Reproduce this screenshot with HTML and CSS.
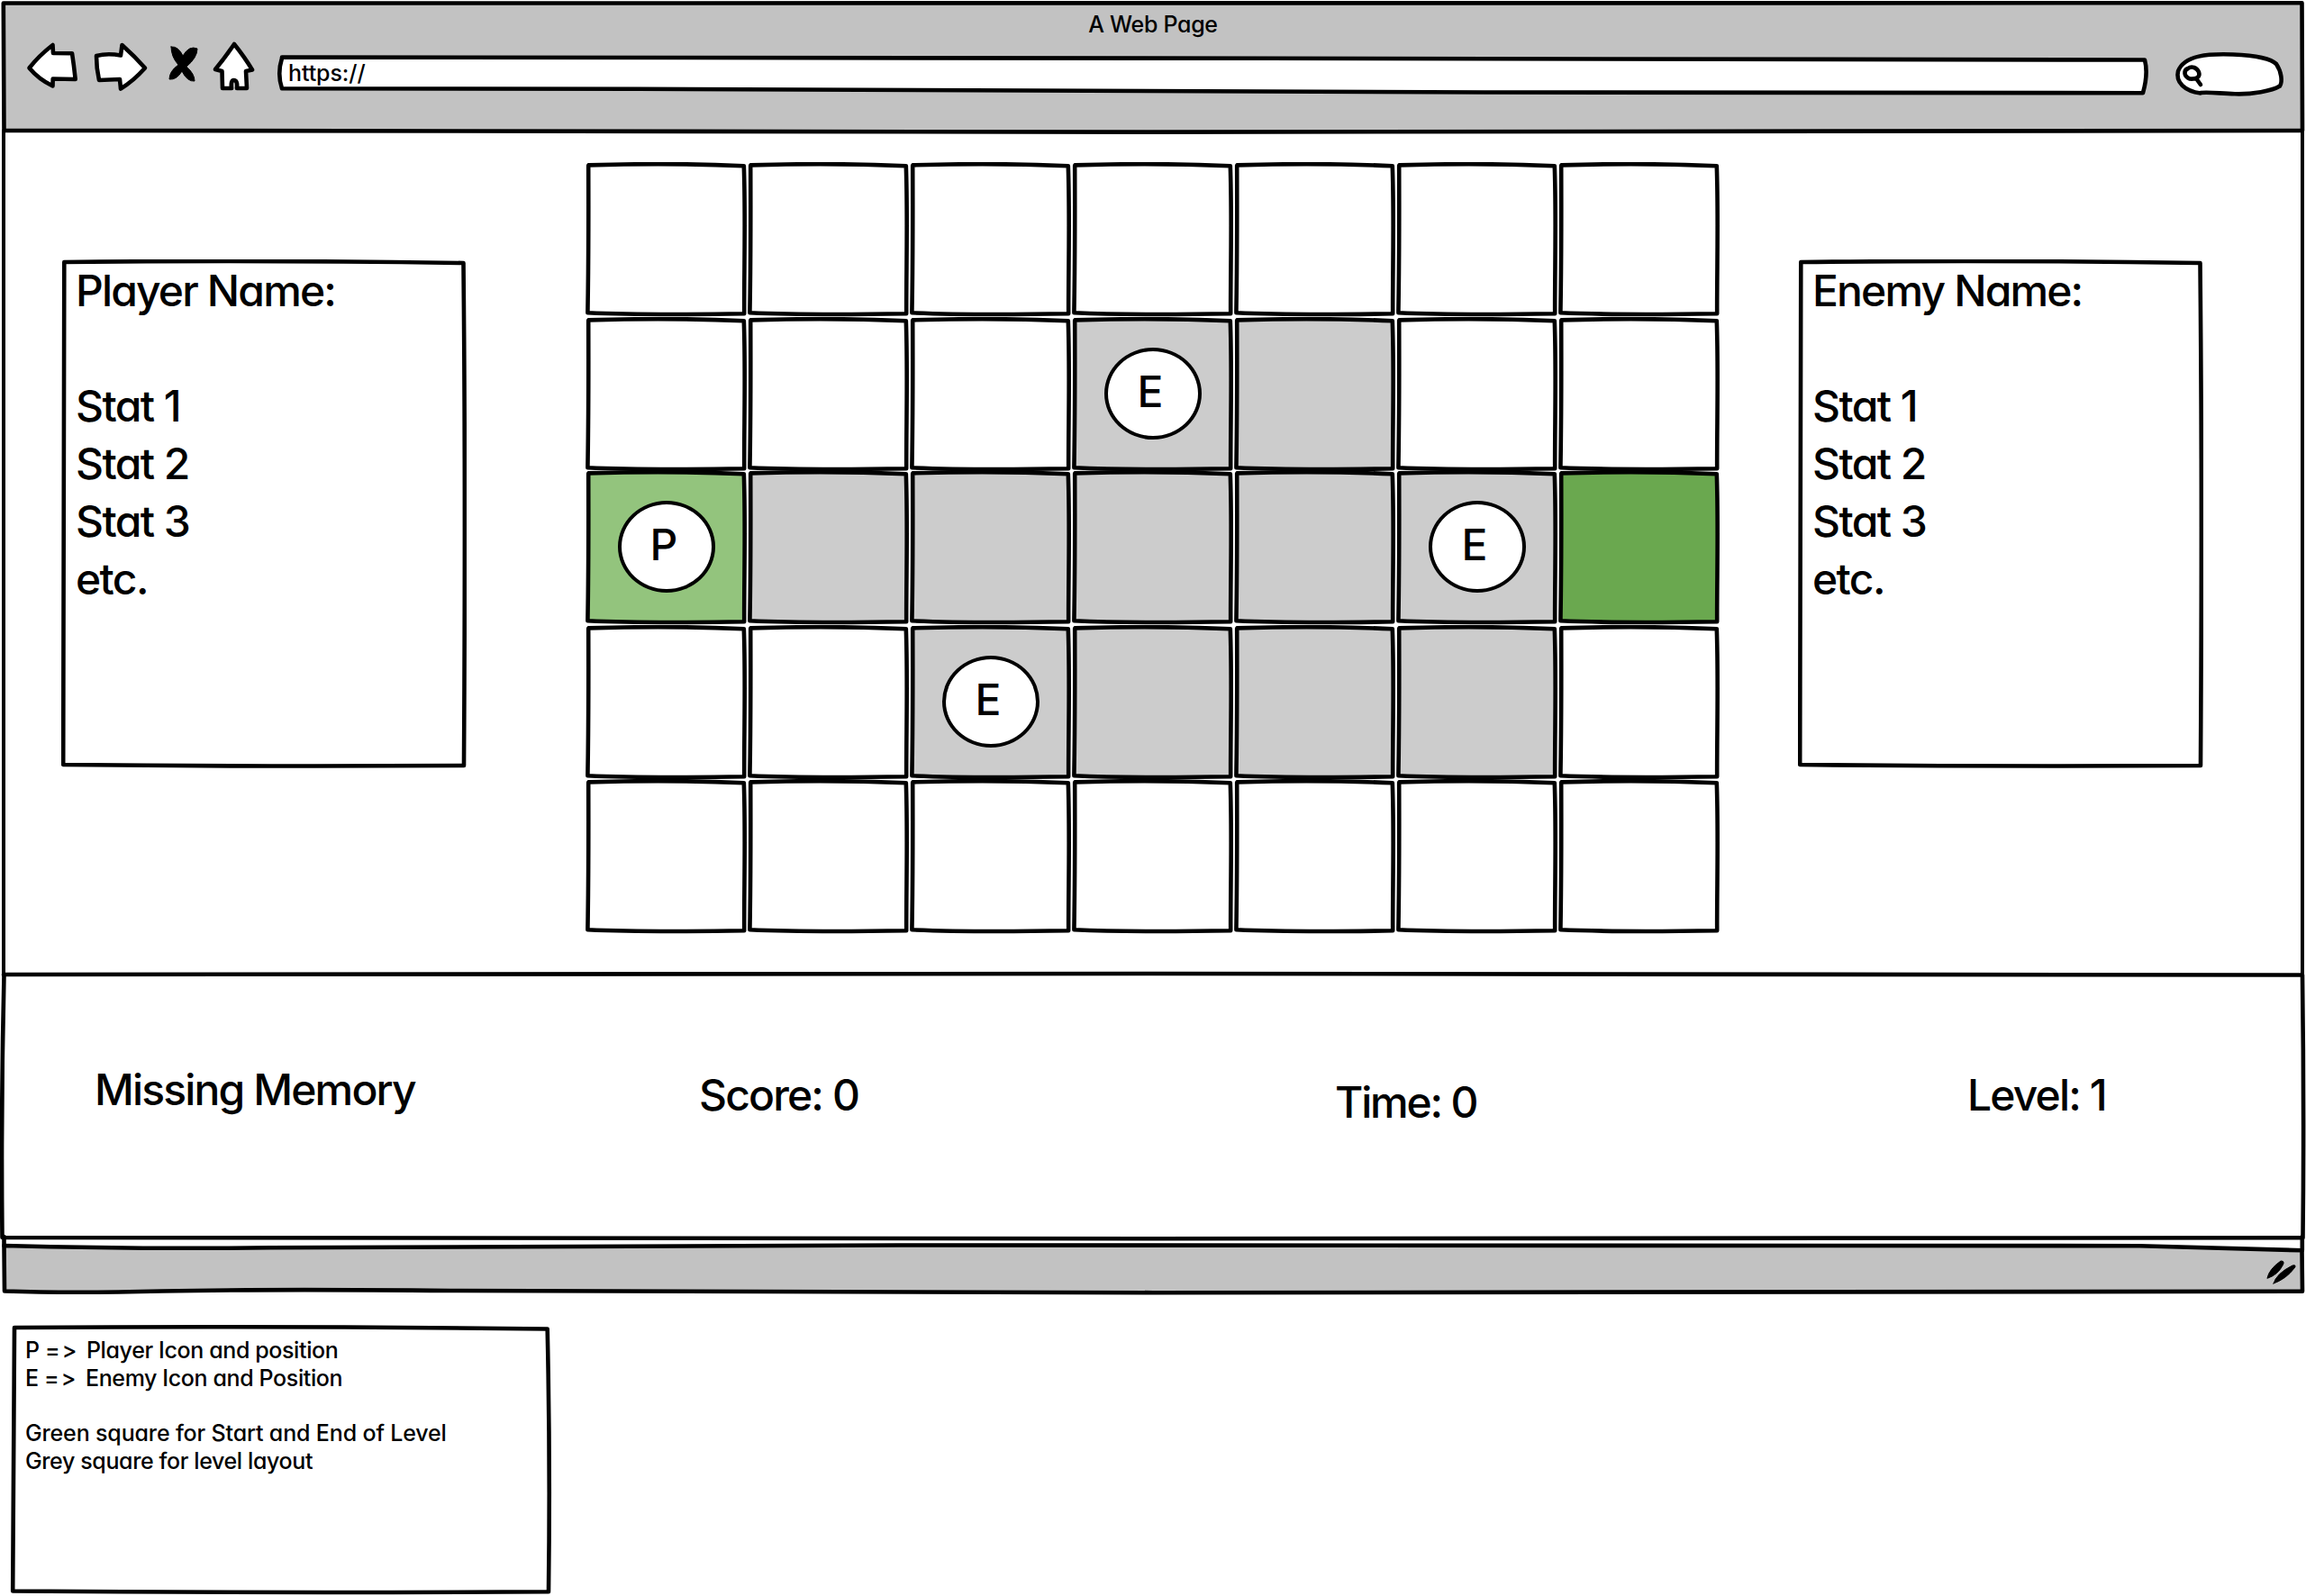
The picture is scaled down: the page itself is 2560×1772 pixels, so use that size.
FILE: index.html
```html
<!DOCTYPE html>
<html lang="en">
<head>
<meta charset="utf-8">
<title>Missing Memory wireframe</title>
<link rel="stylesheet" href="styles.css">
</head>
<body>
<svg class="defs" width="0" height="0" aria-hidden="true">
  <symbol id="tile" viewBox="0 0 180 172"><path d="M3.2 4 C3.4 60 3.4 110 2.4 167.3 C50 169.4 120 169.2 176.2 168.3 C176 120 177.8 60 175.8 4.2 C130 2.2 60 1.6 3.5 3.4Z"/></symbol>
  <symbol id="panel" viewBox="0 0 450 566"><path d="M3.3 3.5 Q4 280 2.2 561 Q220 563.4 447 562 Q449 250 446.5 4 Q220 .5 3.3 3Z"/></symbol>
</svg>

<main class="browser">
  <header class="toolbar">
    <svg class="ink" viewBox="0 0 2560 150"><path d="M4.5 145 L3.8 3.5 L2555.5 3.3 L2556 145 L1280 146.6 Q500 147 4.5 144.8Z"/></svg>
    <h1 class="title">A Web Page</h1>
    <div class="controls">
      <svg class="nav-icons" viewBox="0 0 270 60">
        <path d="M3.5 30.5 Q14 17 29.5 5 L30 14 L51 14.2 Q53 27 54.7 43 L29.7 42.5 L29.5 50.5 Q14 43 3.5 30.5Z"/>
        <path d="M78 17 Q90 13.8 105 16.5 L106.5 5 Q121 18 132 30.5 Q119 45 105 53.5 L104 43 L81 44 Q78 31 78 17Z"/>
        <path class="solid" d="M161 7 Q169 6 174 17 Q181 5 190 9 Q190 19 178 29 Q187 37 187 45 Q179 46 173 34 Q167 44 159 43 Q159 34 169 27 Q161 18 161 7Z"/>
        <path d="M231 4 Q243 19 251 32.5 L244 34 L245 53 L234 53 Q235 44 230.5 44 Q227 44 228 53 L218 53 L217.5 34 L210 32 Q220 20 231 4Z"/>
      </svg>
      <div class="address">
        <svg class="ink" viewBox="0 0 2076 44"><path d="M5 4.5 Q-.5 22 5 38.3 L400 38.8 L1340 42.5 L2071 43.2 Q2077 22 2073 6.5 L1100 4.8 L5 3.5Z"/></svg>
        <span class="url">https://</span>
      </div>
      <svg class="search" viewBox="0 0 120 50">
        <path d="M30 45.5 C12 43 2 33 5 21 C12 3 39 1.5 66 2.5 C93 3.5 109 8 114 13 C120 22 121 33 118 37.5 C109 43 87 47 68 46.3 C52 46 42 44 30 45Z"/>
        <path d="M16 18 C20 15 26 17 28 22 C30 28 25 30 18 29.5 C11 27 11 20 16 18Z M25 29 L30 36"/>
      </svg>
    </div>
  </header>

  <section class="stage">
    <aside class="stats">
      <svg class="ink"><use href="#panel"/></svg>
      <h2 class="name player-name">Player Name:</h2>
      <ul><li>Stat 1</li><li>Stat 2</li><li>Stat 3</li><li>etc.</li></ul>
    </aside>

    <div class="board">
      <div class="tile"><svg><use href="#tile"/></svg></div>
      <div class="tile"><svg><use href="#tile"/></svg></div>
      <div class="tile"><svg><use href="#tile"/></svg></div>
      <div class="tile"><svg><use href="#tile"/></svg></div>
      <div class="tile"><svg><use href="#tile"/></svg></div>
      <div class="tile"><svg><use href="#tile"/></svg></div>
      <div class="tile"><svg><use href="#tile"/></svg></div>

      <div class="tile"><svg><use href="#tile"/></svg></div>
      <div class="tile"><svg><use href="#tile"/></svg></div>
      <div class="tile"><svg><use href="#tile"/></svg></div>
      <div class="tile path"><svg><use href="#tile"/></svg><span class="token">E</span></div>
      <div class="tile path"><svg><use href="#tile"/></svg></div>
      <div class="tile"><svg><use href="#tile"/></svg></div>
      <div class="tile"><svg><use href="#tile"/></svg></div>

      <div class="tile start"><svg><use href="#tile"/></svg><span class="token">P</span></div>
      <div class="tile path"><svg><use href="#tile"/></svg></div>
      <div class="tile path"><svg><use href="#tile"/></svg></div>
      <div class="tile path"><svg><use href="#tile"/></svg></div>
      <div class="tile path"><svg><use href="#tile"/></svg></div>
      <div class="tile path"><svg><use href="#tile"/></svg><span class="token">E</span></div>
      <div class="tile end"><svg><use href="#tile"/></svg></div>

      <div class="tile"><svg><use href="#tile"/></svg></div>
      <div class="tile"><svg><use href="#tile"/></svg></div>
      <div class="tile path"><svg><use href="#tile"/></svg><span class="token">E</span></div>
      <div class="tile path"><svg><use href="#tile"/></svg></div>
      <div class="tile path"><svg><use href="#tile"/></svg></div>
      <div class="tile path"><svg><use href="#tile"/></svg></div>
      <div class="tile"><svg><use href="#tile"/></svg></div>

      <div class="tile"><svg><use href="#tile"/></svg></div>
      <div class="tile"><svg><use href="#tile"/></svg></div>
      <div class="tile"><svg><use href="#tile"/></svg></div>
      <div class="tile"><svg><use href="#tile"/></svg></div>
      <div class="tile"><svg><use href="#tile"/></svg></div>
      <div class="tile"><svg><use href="#tile"/></svg></div>
      <div class="tile"><svg><use href="#tile"/></svg></div>
    </div>

    <aside class="stats">
      <svg class="ink"><use href="#panel"/></svg>
      <h2 class="name enemy-name">Enemy Name:</h2>
      <ul><li>Stat 1</li><li>Stat 2</li><li>Stat 3</li><li>etc.</li></ul>
    </aside>
  </section>

  <section class="scorebar">
    <svg class="ink" viewBox="0 0 2560 300"><path d="M4.5 4.5 Q1 150 2.5 296 L1280 297.2 L2556.5 296.3 Q2558 150 2556 4.5 L1280 3 L4 4Z"/></svg>
    <span class="game">Missing Memory</span>
    <span class="score">Score: 0</span>
    <span class="time">Time: 0</span>
    <span class="level">Level: 1</span>
  </section>

  <footer class="statusbar">
    <svg class="ink" viewBox="0 0 2560 62"><path d="M4.5 -5 V5 M2555.8 -5 V10"/><path d="M4.5 5 Q150 9 300 7.3 L1000 4.5 L2375 5.2 L2555.5 10.3 L2556 55.8 L1280 57.2 L500 55 Q300 53 180 55.5 Q80 58 5 55.5Z"/><path class="solid" d="M2517 1421 Q2519 1411 2532 1402 Q2537 1402 2534 1407 Q2529 1417 2518 1421Z M2524 1427 Q2527 1416 2545 1407 Q2550 1406 2547 1410 Q2538 1422 2524 1427Z" transform="translate(0 -1380)"/></svg>
  </footer>
</main>

<section class="legend">
  <svg class="ink" viewBox="0 0 600 300"><path d="M3 4 Q2.5 150 1.2 295.5 Q300 298 596 296.2 Q598 150 594.7 4.5 Q300 1 3 3Z"/></svg>
  <p class="l1">P <span class="arrow">=&gt;</span>Player Icon and position</p>
  <p class="l2">E <span class="arrow">=&gt;</span>Enemy Icon and Position</p>
  <p class="l3">Green square for Start and End of Level</p>
  <p class="l4">Grey square for level layout</p>
</section>
</body>
</html>
```
FILE: styles.css
```css
* { box-sizing: border-box; margin: 0; padding: 0; }

body {
  width: 2560px;
  height: 1772px;
  overflow: hidden;
  background: #fff;
  color: #000;
  font-family: Inter, "Noto Sans", sans-serif;
  font-feature-settings: "cv11" 1, "calt" 0;
  font-size: 48px;
  font-weight: 500;
  line-height: 64px;
  letter-spacing: -1.85px;
}

h1, h2 { font-size: inherit; font-weight: inherit; }
ul { list-style: none; }
.defs { position: absolute; }

svg {
  fill: #fff;
  stroke: #000;
  stroke-width: 4.6px;
  stroke-linejoin: round;
  stroke-linecap: round;
  overflow: visible;
}
.solid { fill: #000; stroke-width: 1px; }

/* hand-drawn outline lying behind the content of a box */
.ink {
  position: absolute;
  inset: 0;
  width: 100%;
  height: 100%;
  z-index: -1;
}

.browser { display: flex; flex-direction: column; height: 1440px; }

.toolbar {
  position: relative;
  isolation: isolate;
  height: 150px;
  font-size: 25px;
  letter-spacing: -.3px;
}
.toolbar > .ink, .statusbar > .ink { fill: #c2c2c2; }
.title { padding-top: 11px; line-height: 32px; text-align: center; }
.controls { display: flex; align-items: flex-start; padding: 2px 0 0 29px; }
.nav-icons { width: 270px; height: 60px; }
.address {
  position: relative;
  isolation: isolate;
  width: 2076px;
  height: 44px;
  margin: 15px 29px 0 9px;
  padding-left: 12px;
}
.url { display: block; line-height: 42px; letter-spacing: -.1px; }
.search { width: 120px; height: 50px; margin-top: 13px; }

.stage {
  display: flex;
  align-items: flex-start;
  height: 940px;
  border-left: 4.6px solid #000;
  border-right: 4.6px solid #000;
  margin: -6px 2px;
  padding: 36px 0 0 62px;
}
.stats {
  position: relative;
  isolation: isolate;
  width: 450px;
  height: 566px;
  margin-top: 108px;
  padding: 3px 0 0 16px;
}
.stats li { letter-spacing: -1.6px; }
.stats li:first-child { margin-top: 64px; }
.name { white-space: nowrap; }

.board {
  display: grid;
  grid-template-columns: repeat(7, 180px);
  grid-template-rows: 172px 170px 172px 171px 172px;
  margin: 0 86px 0 132px;
}
.tile { display: grid; justify-items: center; align-items: start; }
.tile > * { grid-area: 1 / 1; }
.tile svg { width: 180px; height: 172px; }
.path svg { fill: #ccc; }
.start svg { fill: #93c47d; }
.end svg { fill: #6aa84f; }
.token {
  width: 108px;
  height: 102px;
  margin-top: 34px;
  border: 4px solid #000;
  border-radius: 50%;
  background: #fff;
  padding-right: 6px;
  line-height: 90px;
  text-align: center;
  letter-spacing: 0;
  z-index: 1;
}

.scorebar {
  position: relative;
  isolation: isolate;
  display: flex;
  height: 300px;
  padding-left: 105px;
  white-space: nowrap;
}
.game { width: 671px; padding-top: 100px; }
.score { width: 706px; padding-top: 106px; }
.time { width: 702px; padding-top: 114px; letter-spacing: -2.2px; }
.level { padding-top: 106px; }

.statusbar { position: relative; isolation: isolate; height: 62px; }

.legend {
  position: relative;
  isolation: isolate;
  width: 600px;
  height: 300px;
  margin: 31px 0 0 13px;
  padding: 12.5px 0 0 15px;
  font-size: 25px;
  line-height: 31.2px;
  letter-spacing: -.38px;
  white-space: nowrap;
}
.arrow { display: inline-block; width: 46px; letter-spacing: 2px; }
.l3 { margin-top: 30px; letter-spacing: -.15px; }
```
